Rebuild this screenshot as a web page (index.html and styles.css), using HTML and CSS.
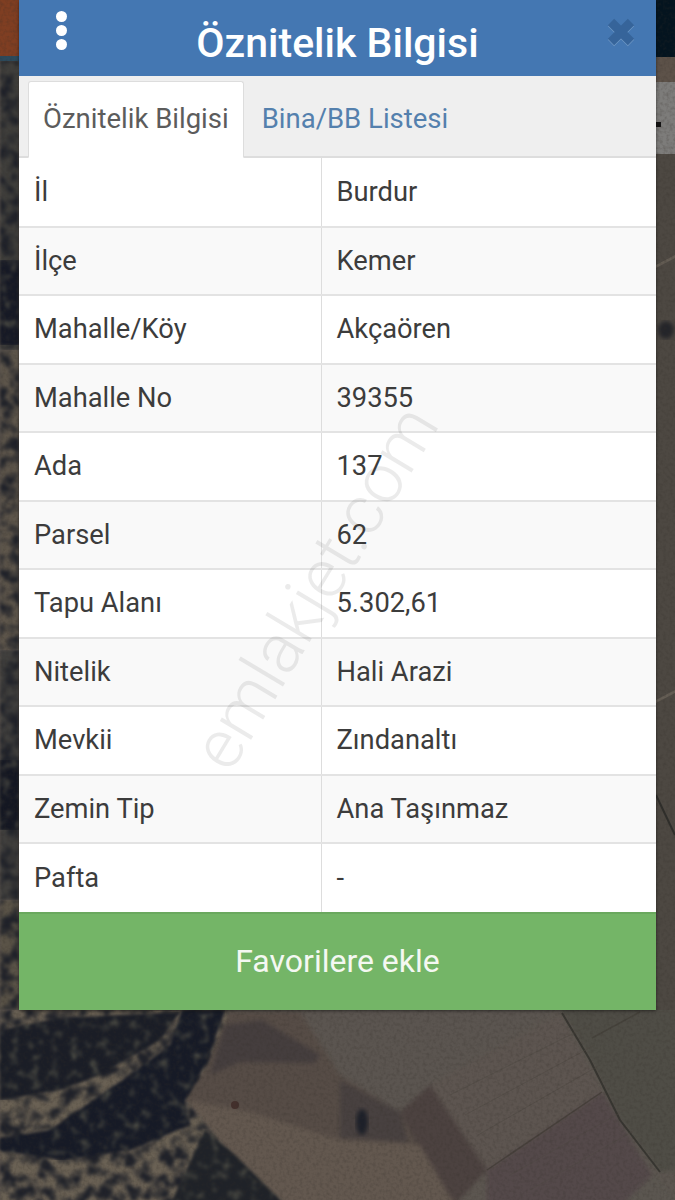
FILE: index.html
```html
<!DOCTYPE html>
<html lang="tr">
<head>
    <meta charset="UTF-8">
    <meta name="viewport" content="width=device-width, initial-scale=1.0">
    <title>Öznitelik Bilgisi</title>
    <link rel="stylesheet" href="styles.css">
</head>
<body>

    <!-- Satellite map behind the modal -->
    <svg class="map" viewBox="0 0 675 1200" preserveAspectRatio="none" aria-hidden="true">
        <defs>
            <filter id="trees" x="0" y="0" width="100%" height="100%" color-interpolation-filters="sRGB">
                <feTurbulence type="fractalNoise" baseFrequency="0.08" numOctaves="3" seed="7" result="noise"/>
                <feColorMatrix in="noise" values="0 0 0 0 0.12  0 0 0 0 0.13  0 0 0 0 0.16  3.5 0 0 0 -1.35" result="spots"/>
                <feComposite in="spots" in2="SourceAlpha" operator="in" result="clipped"/>
                <feMerge result="merged">
                    <feMergeNode in="SourceGraphic"/>
                    <feMergeNode in="clipped"/>
                </feMerge>
                <feGaussianBlur in="merged" stdDeviation="1.6"/>
            </filter>
            <filter id="mottle" x="0" y="0" width="100%" height="100%" color-interpolation-filters="sRGB">
                <feTurbulence type="fractalNoise" baseFrequency="0.1" numOctaves="3" seed="12" result="noise"/>
                <feColorMatrix in="noise" values="0 0 0 0 0.3  0 0 0 0 0.3  0 0 0 0 0.27  3 0 0 0 -1.6" result="spots"/>
                <feComposite in="spots" in2="SourceAlpha" operator="in" result="clipped"/>
                <feMerge result="merged">
                    <feMergeNode in="SourceGraphic"/>
                    <feMergeNode in="clipped"/>
                </feMerge>
                <feGaussianBlur in="merged" stdDeviation="1.6"/>
            </filter>
            <filter id="soft" x="-5%" y="-5%" width="110%" height="110%" color-interpolation-filters="sRGB">
                <feGaussianBlur stdDeviation="2"/>
            </filter>
            <filter id="grain" x="0" y="0" width="100%" height="100%" color-interpolation-filters="sRGB">
                <feTurbulence type="fractalNoise" baseFrequency="0.3" numOctaves="2" seed="3"/>
                <feColorMatrix values="0 0 0 0 0.2  0 0 0 0 0.18  0 0 0 0 0.16  1.2 0 0 0 -0.5"/>
            </filter>
        </defs>
        <rect width="675" height="1200" fill="#5c5650"/>

        <!-- fields on the right -->
        <g filter="url(#soft)">
            <path d="M300 1008H560L430 1085L400 1112L340 1075Z" fill="#5b5550"/>
            <path d="M430 1085L560 1015L602 1092L487 1170Z" fill="#5d5550"/>
            <path d="M487 1170L602 1092L652 1175L622 1205H487Z" fill="#54494a"/>
            <path d="M560 1008H680V1170L660 1172L620 1120L590 1060Z" fill="#4f4d46"/>
            <path d="M622 1205L655 1175L680 1205Z" fill="#5b5650"/>
            <path d="M400 1112L430 1085L487 1170L455 1205L420 1150Z" fill="#4c4240"/>
            <path d="M205 1012H300L340 1075L400 1112L420 1150L455 1205H280L235 1160L185 1100Z" fill="#564c46"/>
            <path d="M225 1025L262 1020L320 1055L315 1063L240 1062L210 1075Z" fill="#453e3e"/>
            <path d="M340 1080L400 1112L408 1142L340 1138Z" fill="#484140"/>
            <path d="M185 1100L250 1112L340 1140L420 1145L455 1205H280L235 1160Z" fill="#63584f"/>
        </g>
        <path d="M562 1013L590 1060L620 1120L660 1172" fill="none" stroke="#33312d" stroke-width="2" opacity="0.85"/>
        <path d="M592 1038L640 1012" fill="none" stroke="#45423b" stroke-width="1.5"/>
        <path d="M450 1095L590 1025M465 1115L595 1045M478 1135L600 1065M510 1175L625 1110M530 1190L635 1130" fill="none" stroke="#4e4741" stroke-width="1" opacity="0.5"/>
        <path d="M487 1170L602 1092" fill="none" stroke="#47403b" stroke-width="1.5"/>
        <ellipse cx="362" cy="1122" rx="6" ry="13" fill="#1d2029" filter="url(#soft)"/>
        <circle cx="235" cy="1105" r="4" fill="#43302c"/>

        <!-- forest -->
        <path d="M0 1010H230L205 1070L185 1100L235 1160L285 1205H0Z" fill="#6a6154" filter="url(#trees)"/>
        <path d="M0 1030L60 1018L180 1012L160 1040L100 1075L60 1090L0 1100Z" fill="#1a1d26" filter="url(#mottle)"/>
        <path d="M182 1010H225L205 1065L185 1100L190 1125L130 1150L60 1160L0 1150V1138L50 1130L130 1075L170 1045Z" fill="#161a26" filter="url(#mottle)"/>
        <path d="M205 1130L235 1155L285 1205H170Z" fill="#1f2228" filter="url(#mottle)"/>

        <!-- strip left of the modal -->
        <rect x="0" y="60" width="19" height="290" fill="#3f3e3b" filter="url(#trees)"/>
        <rect x="0" y="260" width="19" height="85" fill="#161925" filter="url(#mottle)"/>
        <rect x="0" y="350" width="19" height="300" fill="#5e564b" filter="url(#trees)"/>
        <rect x="0" y="650" width="19" height="250" fill="#403f3d" filter="url(#trees)"/>
        <rect x="0" y="760" width="19" height="70" fill="#141722" filter="url(#mottle)"/>
        <rect x="0" y="900" width="19" height="110" fill="#5a5347" filter="url(#trees)"/>
        <rect x="0" y="0" width="19" height="56" fill="#7f3e22"/>
        <rect x="0" y="56" width="19" height="5" fill="#2c4a5c"/>

        <!-- strip right of the modal -->
        <rect x="656" y="154" width="19" height="856" fill="#4d4842"/>
        <path d="M656 265L675 255L675 258L656 268Z" fill="#645d54"/>
        <ellipse cx="666" cy="330" rx="8" ry="9" fill="#24252a" filter="url(#soft)"/>
        <path d="M656 700L675 690V693L656 703Z" fill="#645d54"/>
        <path d="M656 795L675 835" stroke="#2f2e2b" stroke-width="2"/>
        <rect x="656" y="57" width="19" height="25" fill="#5d5249"/>
        <rect x="656" y="0" width="19" height="57" fill="#04141f"/>
        <rect x="656" y="82" width="19" height="72" fill="#7d7c7a"/>
        <rect x="656" y="122" width="5" height="5" fill="#111"/>

        <rect width="675" height="1200" filter="url(#grain)" opacity="0.45"/>
    </svg>

    <main class="modal">
        <header class="modal-header">
            <span class="menu-dots"><i></i><i></i><i></i></span>
            <h1>Öznitelik Bilgisi</h1>
            <svg class="close-icon" viewBox="0 0 30 30" aria-hidden="true">
                <path d="M5 6L25 26M25 6L5 26" stroke="#6f97c4" stroke-width="9"/>
                <path d="M5 5L25 25M25 5L5 25" stroke="#36649a" stroke-width="9"/>
            </svg>
        </header>

        <nav class="tabs">
            <a href="#" class="tab active">Öznitelik Bilgisi</a>
            <a href="#" class="tab">Bina/BB Listesi</a>
        </nav>

        <table class="info-table">
            <tr><td>İl</td><td>Burdur</td></tr>
            <tr><td>İlçe</td><td>Kemer</td></tr>
            <tr><td>Mahalle/Köy</td><td>Akçaören</td></tr>
            <tr><td>Mahalle No</td><td>39355</td></tr>
            <tr><td>Ada</td><td>137</td></tr>
            <tr><td>Parsel</td><td>62</td></tr>
            <tr><td>Tapu Alanı</td><td>5.302,61</td></tr>
            <tr><td>Nitelik</td><td>Hali Arazi</td></tr>
            <tr><td>Mevkii</td><td>Zındanaltı</td></tr>
            <tr><td>Zemin Tip</td><td>Ana Taşınmaz</td></tr>
            <tr><td>Pafta</td><td>-</td></tr>
        </table>

        <a href="#" class="fav-btn">Favorilere ekle</a>
    </main>

    <!-- Watermark -->
    <div class="watermark">emlakjet.com</div>

</body>
</html>
```

FILE: styles.css
```css
/* Reset styles */
* {
    margin: 0;
    padding: 0;
    box-sizing: border-box;
    font-family: Roboto, 'Liberation Sans', sans-serif;
}

body {
    width: 675px;
    height: 1200px;
    position: relative;
    overflow: hidden;
    background: #4f4a44;
    padding: 0 19px;
}

.map {
    position: absolute;
    top: 0;
    left: 0;
    width: 675px;
    height: 1200px;
}

/* Modal */
.modal {
    position: relative;
    display: flex;
    flex-direction: column;
    width: 637px;
    height: 1010px;
    background: #fff;
    box-shadow: 0 1px 3px rgba(0, 0, 0, 0.5);
}

.modal-header {
    height: 76px;
    flex: none;
    display: flex;
    align-items: center;
    justify-content: center;
    background: #4477b2;
    color: #fff;
    padding-top: 10px;
}

.modal-header h1 {
    font-size: 41px;
    font-weight: 500;
    line-height: 48px;
}

.menu-dots {
    position: absolute;
    left: 37px;
    top: 11px;
    display: flex;
    flex-direction: column;
    gap: 3px;
}

.menu-dots i {
    display: block;
    width: 11px;
    height: 11px;
    border-radius: 50%;
    background: #fff;
}

.close-icon {
    position: absolute;
    right: 20px;
    top: 17px;
    width: 30px;
    height: 30px;
}

/* Tabs */
.tabs {
    height: 82px;
    flex: none;
    display: flex;
    align-items: flex-end;
    padding-left: 9px;
    background: #efefef;
    border-bottom: 2px solid #ddd;
}

.tab {
    height: 77px;
    display: flex;
    align-items: center;
    padding: 0 14px 2px;
    font-size: 27.5px;
    color: #5480ad;
    text-decoration: none;
    margin-bottom: -2px;
    margin-left: 3px;
    border: 1px solid transparent;
}

.tab.active {
    color: #5c5c5c;
    background: #fff;
    margin-left: 0;
    border-color: #ddd;
    border-bottom-color: #fff;
    border-radius: 3px 3px 0 0;
}

/* Info table */
.info-table {
    width: 100%;
    border-collapse: collapse;
    table-layout: fixed;
}

.info-table tr {
    height: 68.5px;
}

.info-table tr:nth-child(even) {
    background: #f9f9f9;
}

.info-table td {
    font-size: 27.3px;
    color: #3c3c3c;
    padding: 0 15px;
    border-top: 2px solid #e3e3e3;
    vertical-align: middle;
}

.info-table tr:first-child td {
    border-top: none;
}

.info-table td:first-child {
    width: 302px;
    border-right: 1px solid #ddd;
}

/* Favorite button */
.fav-btn {
    flex: 1;
    display: flex;
    align-items: center;
    justify-content: center;
    background: #74b567;
    border-top: 2px solid #6aa85e;
    color: #f4f8f2;
    font-size: 32px;
    padding-bottom: 2px;
    text-decoration: none;
}

/* Watermark */
.watermark {
    position: absolute;
    left: 125px;
    top: 572px;
    width: 350px;
    font-size: 69px;
    font-weight: 300;
    white-space: nowrap;
    color: rgba(60, 60, 60, 0.1);
    transform: rotate(-59deg);
    text-align: center;
}
```
